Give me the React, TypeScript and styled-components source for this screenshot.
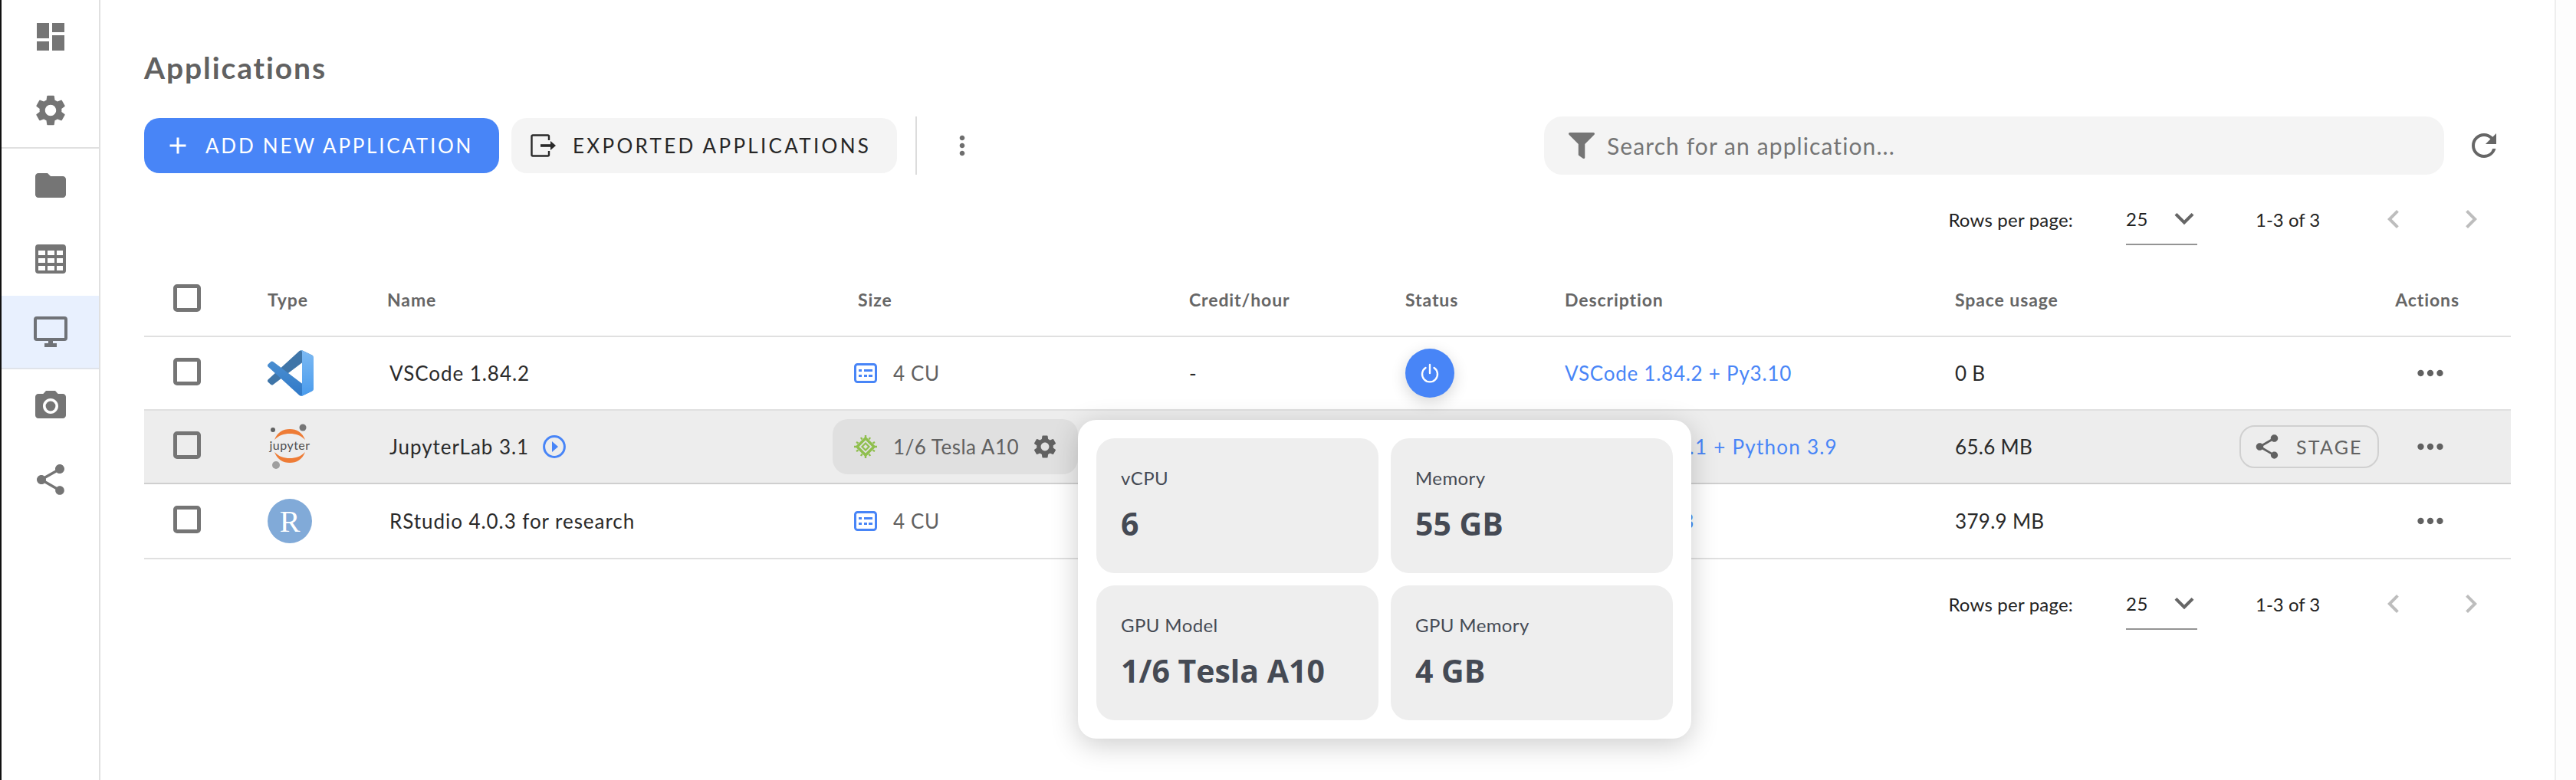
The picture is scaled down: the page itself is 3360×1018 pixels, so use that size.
import React from "react";
import styled, { createGlobalStyle } from "styled-components";
import { MdDashboard, MdSettings, MdFolder, MdPhotoCamera, MdShare, MdRefresh, MdKeyboardArrowDown, MdAdd, MdMoreVert, MdMoreHoriz, MdChevronLeft, MdChevronRight } from "react-icons/md";
import { FaFilter } from "react-icons/fa";

const Global = createGlobalStyle`
  html, body { margin: 0; padding: 0; background: #fff; }
  body { font-family: "Lato", "Open Sans", sans-serif; color: #222; }
  * { box-sizing: border-box; }
`;

const Page = styled.div`display: flex; width: 3360px; height: 1018px; overflow: hidden; background: #fff;`;
const Sidebar = styled.nav`width: 131px; flex: none; border-left: 2px solid #111; border-right: 2px solid #e0e0e0; color: #757575;`;
const NavItem = styled.div<{ $active?: boolean }>`
  height: 96px; display: flex; align-items: center; justify-content: center;
  background: ${p => (p.$active ? "#e8f0fe" : "transparent")};
  border-bottom: ${p => (p.$active ? "2px solid #dfe3ea" : "none")};
  svg { display: block; }
`;
const NavDivider = styled.div`height: 2px; background: #e0e0e0;`;
const Main = styled.main`flex: 1; padding: 66px 57px 0; min-width: 0;`;
const Gutter = styled.div`width: 28px; flex: none; border-left: 2px solid #eee; background: #fdfdfd;`;
const Title = styled.h1`margin: 0; font-size: 39px; line-height: 44px; font-weight: 700; color: #616161; letter-spacing: 1.9px;`;
const Toolbar = styled.div`display: flex; align-items: center; margin-top: 42px; height: 76px; padding-right: 6px;`;
const ActionButton = styled.button<{ $primary?: boolean; $w: number }>`
  width: ${p => p.$w}px; height: 72px; border: none; border-radius: 20px; display: flex; align-items: center;
  padding: 0 0 0 ${p => (p.$primary ? 26 : 25)}px; gap: ${p => (p.$primary ? 18 : 21)}px;
  background: ${p => (p.$primary ? "#4885f7" : "#f4f4f4")};
  color: ${p => (p.$primary ? "#fff" : "#262626")};
  font: 400 26px "Lato", sans-serif; letter-spacing: 2.75px; text-transform: uppercase;
  svg { flex: none; }
`;
const ExportButton = styled(ActionButton)`margin-left: 16px; letter-spacing: 3.3px;`;
const VDivider = styled.div`width: 2px; height: 76px; background: #dcdcdc; margin-left: 24px;`;
const MoreButton = styled.div`width: 40px; margin-left: 39px; color: #6e6e6e; display: flex; justify-content: center;`;
const Search = styled.div`
  margin-left: auto; width: 1174px; height: 76px; background: #f4f4f4; border-radius: 24px;
  display: flex; align-items: center; padding-left: 32px; gap: 16px; color: #757575;
  font-size: 30px; letter-spacing: 1.1px;
`;
const Reload = styled.div`width: 58px; margin-left: 23px; color: #666; display: flex; justify-content: center;`;
const Pager = styled.div`
  display: flex; align-items: center; justify-content: flex-end; height: 92px; margin: 12px 0; padding-right: 28px;
  font-size: 24px; color: #222;
`;
const PagerLabel = styled.span`letter-spacing: .2px;`;
const PagerSelect = styled.div`
  width: 93px; height: 80px; align-self: flex-start; margin-left: 69px; padding-top: 12px; border-bottom: 2px solid #949494;
  display: flex; align-items: center; justify-content: space-between; font-size: 24px; color: #222; letter-spacing: .5px;
  svg { color: #666; margin-right: -8px; }
`;
const PagerRange = styled.span`margin-left: 76px; width: 156px; letter-spacing: 0;`;
const PagerArrow = styled.div`width: 101px; color: #bdbdbd; display: flex; &:last-child { width: 48px; }`;
const COLS = "161px 156px 614px 432px 282px 208px 509px 300px 1fr";
const HeadRow = styled.div`
  display: grid; grid-template-columns: ${COLS}; align-items: center; height: 96px;
  border-bottom: 2px solid #e0e0e0; font-size: 23px; font-weight: 700; color: #666; letter-spacing: .9px;
`;
const Row = styled.div<{ $hl?: boolean; $h?: number }>`
  display: grid; grid-template-columns: ${COLS}; align-items: center; height: ${p => p.$h ?? 96}px;
  background: ${p => (p.$hl ? "#ededed" : "transparent")};
  border-bottom: 2px solid ${p => (p.$hl ? "#cfcfcf" : "#e0e0e0")};
  font-size: 26px; color: #2a2a2a;
`;
const CheckCell = styled.div`padding-left: 38px; display: flex;`;
const Check = styled.span`width: 36px; height: 36px; margin-top: -4px; border: 5px solid #757575; border-radius: 5px; display: block;`;
const NameCell = styled.div`padding-left: 3px; display: flex; align-items: center; gap: 18px; letter-spacing: .95px;`;
const SizeCell = styled.div`display: flex; align-items: center; margin-left: -5px; gap: 21px; color: #616161; letter-spacing: .6px;`;
const PillWrap = styled.div`position: relative; margin-left: -33px; width: 320px;`;
const Pill = styled.div`
  height: 72px; border-radius: 20px; background: #e0e0e0; padding-left: 28px; display: flex; align-items: center;
  color: #616161; font-size: 26px; letter-spacing: .5px;
`;
const PillText = styled.span`margin-left: 21px; margin-right: 16px; white-space: nowrap;`;
const Popover = styled.div`
  position: absolute; left: 100%; top: 1px; z-index: 5; width: 800px; height: 416px; background: #fff; border-radius: 24px;
  padding: 24px; display: grid; grid-template-columns: 368px 368px; grid-auto-rows: 176px; gap: 16px;
  box-shadow: 0 8px 36px rgba(0,0,0,.2);
`;
const Card = styled.div`
  background: #eee; border-radius: 24px; padding: 36px 32px 0; color: #454a54;
  display: flex; flex-direction: column;
`;
const CardLabel = styled.div`font-size: 24px; line-height: 32px; letter-spacing: .4px;`;
const CardValue = styled.div`font-family: "Open Sans", sans-serif; font-weight: 700; font-size: 41px; line-height: 50px; margin-top: 18px;`;
const Credit = styled.div``;
const StatusCell = styled.div`display: flex;`;
const PowerButton = styled.div`
  width: 64px; height: 64px; border-radius: 50%; background: #4885f7; display: flex; align-items: center; justify-content: center;
  box-shadow: 0 6px 20px rgba(0,0,0,.16);
`;
const DescLink = styled.span<{ $wide?: boolean }>`color: #4885f7; letter-spacing: ${p => (p.$wide ? 1.25 : 0.75)}px; white-space: nowrap;`;
const Space = styled.div`letter-spacing: .3px;`;
const ActionCell = styled.div`display: flex; align-items: center; justify-content: flex-end; gap: 42px; padding-right: 80px; color: #616161;`;
const HeadAction = styled.div`text-align: right; padding-right: 67px;`;
const StageButton = styled.div`
  width: 182px; height: 56px; border: 2px solid #d0d0d0; border-radius: 20px; display: flex; align-items: center;
  padding-left: 15px; gap: 19px; color: #616161; font-size: 25px; letter-spacing: 2.2px;
`;
const RLogo = styled.div`
  width: 58px; height: 58px; border-radius: 50%; background: #81aad8; color: #fff; display: flex; align-items: center; justify-content: center;
  font: 400 40px "Liberation Serif", serif;
`;
const LogoCell = styled.div`display: flex;`;

const VSCode = () => (
  <svg width="60" height="60" viewBox="0 0 100 100">
    <defs>
      <linearGradient id="vsr" x1="0" y1="0" x2="0" y2="1"><stop offset="0" stopColor="#7cb9f3" /><stop offset="1" stopColor="#4a9bec" /></linearGradient>
      <linearGradient id="vsf" x1="0" y1="0" x2="0" y2="1"><stop offset="0" stopColor="#4a8ed0" /><stop offset="1" stopColor="#3079c8" /></linearGradient>
    </defs>
    <path fill="#3f75a8" d="M96.4614 10.7962L75.8569 0.875542C73.4719 -0.272773 70.6217 0.211611 68.75 2.08333L1.29858 63.5832C-0.515693 65.2373 -0.513607 68.0937 1.30308 69.7452L6.81272 74.754C8.29793 76.1042 10.5347 76.2036 12.1338 74.9905L93.3609 13.3699C96.086 11.3026 100 13.2462 100 16.6667V16.4275C100 14.0265 98.6246 11.8378 96.4614 10.7962Z" />
    <path fill="url(#vsf)" d="M96.4614 89.2038L75.8569 99.1245C73.4719 100.273 70.6217 99.7884 68.75 97.9167L1.29858 36.4168C-0.515693 34.7627 -0.513607 31.9063 1.30308 30.2548L6.81272 25.246C8.29793 23.8958 10.5347 23.7964 12.1338 25.0095L93.3609 86.6301C96.086 88.6974 100 86.7538 100 83.3333V83.5725C100 85.9735 98.6246 88.1622 96.4614 89.2038Z" />
    <path fill="url(#vsr)" d="M75.8569 99.1245C73.4719 100.273 70.6217 99.7884 68.75 97.9167C71.0562 100.223 75 98.5895 75 95.3333V4.66667C75 1.41054 71.0562 -0.223 68.75 2.08333C70.6217 0.211611 73.4719 -0.272773 75.8569 0.875542L96.4614 10.7962C98.6246 11.8378 100 14.0265 100 16.4275V83.5725C100 85.9735 98.6246 88.1622 96.4614 89.2038Z" />
  </svg>
);
const Jupyter = () => (
  <svg width="60" height="62" viewBox="0 0 60 62">
    <circle cx="46" cy="6" r="4.5" fill="#767677" />
    <circle cx="7" cy="9" r="3" fill="#616262" />
    <circle cx="11" cy="55" r="5" fill="#9e9e9e" />
    <path fill="#ee7c36" d="M9 22C13 12 20 8 29 8s16 4 20 14C43 16 37 14 29 14S15 16 9 22z" />
    <path fill="#ee7c36" d="M9 38c4 10 11 14 20 14s16-4 20-14c-6 6-12 8-20 8S15 44 9 38z" />
    <text x="29" y="35" textAnchor="middle" fontFamily="Lato, sans-serif" fontSize="16" fill="#4e4e4e" letterSpacing=".5">jupyter</text>
  </svg>
);
const CpuIcon = () => (
  <svg width="30" height="26" viewBox="0 0 30 26">
    <rect x="1.5" y="1.5" width="27" height="23" rx="3" fill="none" stroke="#4885f7" strokeWidth="3" />
    <rect x="6" y="8" width="4" height="3" fill="#4885f7" /><rect x="13" y="8" width="11" height="3" fill="#4885f7" />
    <rect x="6" y="15" width="4" height="3" fill="#4885f7" /><rect x="13" y="15" width="4" height="3" fill="#4885f7" /><rect x="19" y="15" width="5" height="3" fill="#4885f7" />
  </svg>
);
const GpuIcon = () => (
  <svg width="30" height="30" viewBox="0 0 30 30">
    <path d="M15 4 L26 15 L15 26 L4 15Z" fill="none" stroke="#8fbf4d" strokeWidth="3.4" />
    <path d="M15 10.5 L19.5 15 L15 19.5 L10.5 15Z" fill="none" stroke="#8fbf4d" strokeWidth="2.2" />
    <path d="M15 0v3M9 3l1.5 2.5M21 3l-1.5 2.5M3 9l2.5 1.5M27 9l-2.5 1.5M0 15h3M30 15h-3M3 21l2.5-1.5M27 21l-2.5-1.5M9 27l1.5-2.5M21 27l-1.5-2.5M15 30v-3" stroke="#8fbf4d" strokeWidth="2.4" />
  </svg>
);
const ExportIcon = () => (
  <svg width="34" height="30" viewBox="0 0 34 30" fill="none" stroke="#2a2a2a">
    <path d="M24 8V3a1.5 1.5 0 0 0-1.5-1.5H3A1.5 1.5 0 0 0 1.5 3v24A1.5 1.5 0 0 0 3 28.500h19.500A1.500 1.500 0 0 0 24 27v-5" strokeWidth="2.4" />
    <path d="M13 15h14" strokeWidth="3.6" />
    <path d="M26 9l7 6-7 6z" fill="#2a2a2a" stroke="none" />
  </svg>
);
const TableIcon = () => (
  <svg width="40" height="38" viewBox="0 0 40 38">
    <path fillRule="evenodd" fill="#757575" d="M4 0h32a4 4 0 0 1 4 4v30a4 4 0 0 1-4 4H4a4 4 0 0 1-4-4V4a4 4 0 0 1 4-4zM4 8v6h9V8zm12 0v6h9V8zm12 0v6h8V8zM4 18v6h9v-6zm12 0v6h9v-6zm12 0v6h8v-6zM4 28v6h9v-6zm12 0v6h9v-6zm12 0v6h8v-6z" />
  </svg>
);
const MonitorIcon = () => (
  <svg width="44" height="40" viewBox="0 0 44 40" fill="#6f7277">
    <path fillRule="evenodd" d="M4 0h36a4 4 0 0 1 4 4v24a4 4 0 0 1-4 4H4a4 4 0 0 1-4-4V4a4 4 0 0 1 4-4zm0 4v24h36V4z" />
    <rect x="19" y="31" width="6" height="5" /><rect x="14" y="35" width="16" height="5" />
  </svg>
);
const PowerIcon = () => (
  <svg width="28" height="28" viewBox="0 0 28 28" fill="none" stroke="#fff" strokeWidth="2.4" strokeLinecap="round">
    <path d="M14 3v11" /><path d="M8.500 7a10 10 0 1 0 11 0" />
  </svg>
);
const PlayCircle = () => (
  <svg width="30" height="30" viewBox="0 0 30 30">
    <circle cx="15" cy="15" r="13.400" fill="none" stroke="#4885f7" strokeWidth="3" />
    <path d="M12 8l8 7-8 7z" fill="#4885f7" />
  </svg>
);

const PagerBar = () => (
  <Pager>
    <PagerLabel>Rows per page:</PagerLabel>
    <PagerSelect>25<MdKeyboardArrowDown size={50} /></PagerSelect>
    <PagerRange>1-3 of 3</PagerRange>
    <PagerArrow><MdChevronLeft size={48} /></PagerArrow>
    <PagerArrow><MdChevronRight size={48} /></PagerArrow>
  </Pager>
);

const specs = [
  { label: "vCPU", value: "6" },
  { label: "Memory", value: "55 GB" },
  { label: "GPU Model", value: "1/6 Tesla A10" },
  { label: "GPU Memory", value: "4 GB" },
];

export default function App() {
  return (
    <Page>
      <Global />
      <Sidebar>
        <NavItem><MdDashboard size={48} /></NavItem>
        <NavItem><MdSettings size={48} /></NavItem>
        <NavDivider />
        <NavItem><MdFolder size={48} /></NavItem>
        <NavItem><TableIcon /></NavItem>
        <NavItem $active><MonitorIcon /></NavItem>
        <NavItem><MdPhotoCamera size={48} /></NavItem>
        <NavItem><MdShare size={48} /></NavItem>
      </Sidebar>
      <Main>
        <Title>Applications</Title>
        <Toolbar>
          <ActionButton $primary $w={463}><MdAdd size={36} />Add new application</ActionButton>
          <ExportButton $w={503}><ExportIcon />Exported applications</ExportButton>
          <VDivider />
          <MoreButton><MdMoreVert size={48} /></MoreButton>
          <Search><FaFilter size={34} />Search for an application...</Search>
          <Reload><MdRefresh size={48} /></Reload>
        </Toolbar>
        <PagerBar />
        <HeadRow>
          <CheckCell><Check /></CheckCell>
          <div>Type</div><div>Name</div><div>Size</div><div>Credit/hour</div><div>Status</div><div>Description</div><div>Space usage</div>
          <HeadAction>Actions</HeadAction>
        </HeadRow>
        <Row>
          <CheckCell><Check /></CheckCell>
          <LogoCell><VSCode /></LogoCell>
          <NameCell>VSCode 1.84.2</NameCell>
          <SizeCell><CpuIcon />4 CU</SizeCell>
          <Credit>-</Credit>
          <StatusCell><PowerButton><PowerIcon /></PowerButton></StatusCell>
          <DescLink>VSCode 1.84.2 + Py3.10</DescLink>
          <Space>0 B</Space>
          <ActionCell><MdMoreHoriz size={50} /></ActionCell>
        </Row>
        <Row $hl>
          <CheckCell><Check /></CheckCell>
          <LogoCell><Jupyter /></LogoCell>
          <NameCell>JupyterLab 3.1 <PlayCircle /></NameCell>
          <PillWrap>
            <Pill><GpuIcon /><PillText>1/6 Tesla A10</PillText><MdSettings size={36} /></Pill>
            <Popover>
              {specs.map(s => (
                <Card key={s.label}><CardLabel>{s.label}</CardLabel><CardValue>{s.value}</CardValue></Card>
              ))}
            </Popover>
          </PillWrap>
          <Credit>-</Credit>
          <StatusCell />
          <DescLink $wide>JupyterLab 3.1 + Python 3.9</DescLink>
          <Space>65.6 MB</Space>
          <ActionCell><StageButton><MdShare size={38} />STAGE</StageButton><MdMoreHoriz size={50} /></ActionCell>
        </Row>
        <Row $h={98}>
          <CheckCell><Check /></CheckCell>
          <LogoCell><RLogo>R</RLogo></LogoCell>
          <NameCell>RStudio 4.0.3 for research</NameCell>
          <SizeCell><CpuIcon />4 CU</SizeCell>
          <Credit>-</Credit>
          <StatusCell />
          <DescLink $wide>RStudio 4.0.3</DescLink>
          <Space>379.9 MB</Space>
          <ActionCell><MdMoreHoriz size={50} /></ActionCell>
        </Row>
        <PagerBar />
      </Main>
      <Gutter />
    </Page>
  );
}
